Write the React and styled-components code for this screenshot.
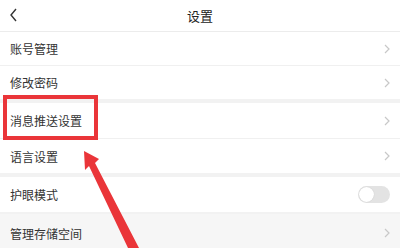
import React from 'react';
import styled, { createGlobalStyle } from 'styled-components';

const Global = createGlobalStyle`
  body {
    margin: 0;
    background: #ffffff;
    font-family: "Noto Sans CJK SC", "Noto Sans", sans-serif;
  }
`;

const Page = styled.div`
  position: relative;
  width: 400px;
  height: 248px;
  overflow: hidden;
  background: #f2f2f2;
`;

const Header = styled.div`
  height: 31px;
  display: flex;
  align-items: center;
  justify-content: center;
  position: relative;
  background: #fff;
  border-bottom: 1px solid #ececec;
  font-size: 13px;
  color: #222;
`;

const Back = styled.svg`
  position: absolute;
  left: 9px;
  top: 8px;
`;

const Group = styled.div`
  background: #fff;
  margin-bottom: ${p => (p.gap === undefined ? 4 : p.gap)}px;
`;

const Row = styled.div`
  height: ${p => p.h}px;
  display: flex;
  align-items: center;
  justify-content: space-between;
  padding: 0 10px;
  box-sizing: border-box;
  background: ${p => (p.pressed ? '#f6f6f6' : '#fff')};
  border-top: ${p => (p.first ? 'none' : '1px solid #f0f0f0')};
  font-size: 12px;
  color: #333;
`;

const Chevron = () => (
  <svg width="6" height="10" viewBox="0 0 6 10">
    <path d="M1 1 L5 5 L1 9" fill="none" stroke="#c8c8c8" strokeWidth="1.2" />
  </svg>
);

const Toggle = styled.div`
  width: 32px;
  height: 17px;
  border-radius: 9px;
  background: #e3e3e3;
  position: relative;
  &::after {
    content: '';
    position: absolute;
    left: 1px;
    top: 1px;
    width: 15px;
    height: 15px;
    border-radius: 50%;
    background: #fff;
    box-shadow: 0 0 1px rgba(0, 0, 0, 0.2);
  }
`;

const Highlight = styled.div`
  position: absolute;
  left: 3px;
  top: 95px;
  width: 95px;
  height: 45px;
  box-sizing: border-box;
  border: 4px solid #ea3539;
`;

const Arrow = styled.svg`
  position: absolute;
  left: 0;
  top: 0;
`;

export default function App() {
  return (
    <Page>
      <Global />
      <Header>
        <Back width="10" height="14" viewBox="0 0 10 14">
          <path d="M7 1 L2 7 L7 13" fill="none" stroke="#333" strokeWidth="1.4" />
        </Back>
        设置
      </Header>
      <Group>
        <Row h={33} first>账号管理<Chevron /></Row>
        <Row h={34}>修改密码<Chevron /></Row>
      </Group>
      <Group>
        <Row h={35} first>消息推送设置<Chevron /></Row>
        <Row h={35}>语言设置<Chevron /></Row>
      </Group>
      <Group gap={2}>
        <Row h={35} first>护眼模式<Toggle /></Row>
      </Group>
      <Group>
        <Row h={38} first pressed>管理存储空间<Chevron /></Row>
      </Group>
      <Highlight />
      <Arrow width="400" height="248" viewBox="0 0 400 248">
        <polygon points="84,151 99,159 95,163 139,248 128,248 89,166 85,170" fill="#ea3539" />
      </Arrow>
    </Page>
  );
}
